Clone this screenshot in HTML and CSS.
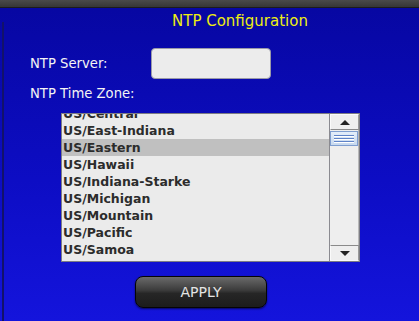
FILE: index.html
```html
<!DOCTYPE html>
<html lang="en">

<head>
    <meta charset="UTF-8">
    <title>NTP Configuration</title>
    <link rel="stylesheet" href="styles.css">
</head>

<body>
    <div class="topbar"></div>
    <div class="screen">
        <h1 class="title">NTP Configuration</h1>
        <div class="server-row">
            <label class="label" for="server">NTP Server:</label>
            <input class="field" id="server" type="text">
        </div>
        <div class="label tz-label">NTP Time Zone:</div>
        <div class="listbox">
            <ul class="items">
                <li class="first">US/Central</li>
                <li>US/East-Indiana</li>
                <li class="selected">US/Eastern</li>
                <li>US/Hawaii</li>
                <li>US/Indiana-Starke</li>
                <li>US/Michigan</li>
                <li>US/Mountain</li>
                <li>US/Pacific</li>
                <li>US/Samoa</li>
            </ul>
            <div class="scrollbar">
                <div class="arrow up"><span></span></div>
                <div class="track">
                    <div class="thumb"><i></i><i></i><i></i></div>
                </div>
                <div class="arrow down"><span></span></div>
            </div>
        </div>
        <div class="actions">
            <button class="apply" type="button">APPLY</button>
        </div>
    </div>
</body>

</html>
```

FILE: styles.css
```css
body {
    margin: 0;
    width: 419px;
    height: 321px;
    overflow: hidden;
    font-family: "DejaVu Sans", Verdana, sans-serif;
    background-color: #0b0bb0;
}

.topbar {
    height: 7px;
    background: linear-gradient(#4a4a4a, #363636);
    border-bottom: 1px solid #1c1c1c;
}

/* blue panel with the form */
.screen {
    position: relative;
    box-sizing: border-box;
    height: 313px;
    padding: 5px 0 0 30px;
    background: linear-gradient(#0707a2, #0d0dc4 55%, #1414dc);
}

.screen::before {
    content: "";
    position: absolute;
    left: 2px;
    top: 14px;
    bottom: 0;
    width: 2px;
    background-color: #12126a;
}

.title {
    margin: 0 0 18px 0;
    padding-left: 142px;
    font-size: 15px;
    font-weight: normal;
    line-height: 17px;
    color: #eeee10;
}

.server-row {
    display: grid;
    grid-template-columns: 121px 120px;
    height: 31px;
}

.label {
    font-size: 13.2px;
    line-height: 31px;
    color: #f4f4f4;
}

.field {
    box-sizing: border-box;
    width: 120px;
    height: 31px;
    margin: 0;
    background-color: #ececec;
    border: 1px solid #9a9aa8;
    border-radius: 4px;
}

.tz-label {
    margin-top: 7px;
    line-height: 15px;
}

.listbox {
    display: flex;
    box-sizing: border-box;
    width: 299px;
    height: 149px;
    margin: 12px 0 0 31px;
    background-color: #ebebeb;
    border: 1px solid #7c7c84;
    overflow: hidden;
}

.items {
    flex: 1;
    margin: 0;
    padding: 0;
    list-style: none;
    overflow: hidden;
    border-right: 1px solid #8a8a90;
}

.items li {
    height: 17px;
    padding-left: 1px;
    font-size: 12.5px;
    font-weight: bold;
    line-height: 17px;
    color: #2c2c2c;
    white-space: nowrap;
}

.items .first {
    margin-top: -9px;
}

.items .selected {
    background-color: #c0c0c0;
}

.scrollbar {
    display: flex;
    flex-direction: column;
    width: 29px;
    background-color: #eeeeee;
}

.arrow {
    display: flex;
    align-items: center;
    justify-content: center;
    box-sizing: border-box;
    height: 16px;
    background-color: #eeeeee;
    border: 1px solid #fafafa;
    border-right-color: #9a9a9a;
}

.arrow.up {
    border-bottom: 1px solid #8a8a8a;
}

.arrow.down {
    border-top: 1px solid #8a8a8a;
}

.arrow span {
    width: 0;
    height: 0;
    border-left: 5px solid transparent;
    border-right: 5px solid transparent;
}

.up span {
    border-bottom: 5px solid #222222;
}

.down span {
    border-top: 5px solid #222222;
}

.track {
    flex: 1;
    padding-top: 1px;
    border-right: 1px solid #b8b8b8;
}

.thumb {
    display: flex;
    flex-direction: column;
    justify-content: center;
    gap: 2px;
    box-sizing: border-box;
    height: 15px;
    padding: 0 3px;
    background: linear-gradient(#e4eefa, #c6d8ee);
    border: 1px solid #7f9ed0;
}

.thumb i {
    display: block;
    height: 1px;
    background-color: #5f83c8;
    box-shadow: 0 1px 0 #ffffff;
}

.actions {
    margin: 14px 0 0 105px;
}

.apply {
    box-sizing: border-box;
    width: 132px;
    height: 32px;
    padding: 0;
    font-family: "DejaVu Sans", Verdana, sans-serif;
    font-size: 14px;
    line-height: 30px;
    color: #e4e4e4;
    background: linear-gradient(#6a6a6a, #3a3a3a 45%, #262626 55%, #1c1c1c);
    border: 1px solid #050505;
    border-radius: 8px;
    box-shadow: 0 1px 2px rgba(0, 0, 0, 0.6);
}
```
